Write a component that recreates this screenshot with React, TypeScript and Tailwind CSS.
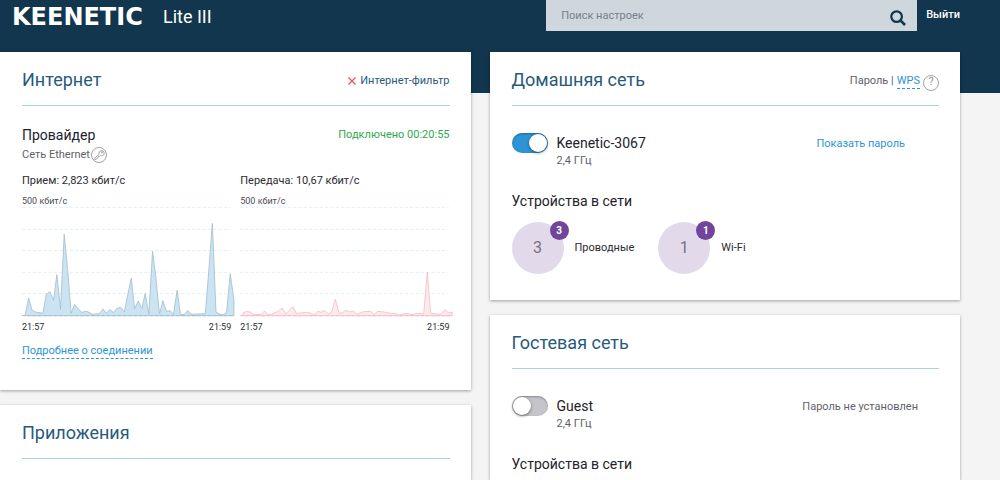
import { useState, type ReactNode } from "react";

const RECEIVED =
  "9,326 20,273 30,309 41,315 63,319 73,262 84,254 95,280 105,203 116,307 127,82 137,184 148,319 158,292 169,306 180,316 193,313 202,316 212,322 233,320 244,306 254,319 265,307 275,317 286,304 297,301 308,315 318,265 329,214 339,305 350,282 361,305 371,259 382,322 393,133 403,211 414,321 424,281 435,313 446,311 456,322 467,250 477,322 489,323 499,310 509,322 552,320 563,184 573,49 584,315 595,322 606,323 616,315 627,200 638,279 638,326";

const SENT =
  "9,326 9,318 20,313 30,315 42,323 64,322 74,312 85,324 96,321 115,313 127,303 138,321 159,299 170,319 200,316 212,318 223,324 234,313 244,316 255,310 266,321 276,315 287,276 298,319 308,317 319,310 330,315 341,312 352,322 372,314 394,313 404,323 414,313 434,315 454,319 468,319 479,324 499,319 522,323 532,319 553,321 564,195 574,319 606,322 617,308 627,317 639,315 639,326";

const GRID = [1, 67, 131, 196, 260, 326];

function TrafficChart({ label, value, points, fill, stroke }: {
  label: string;
  value: string;
  points: string;
  fill: string;
  stroke: string;
}) {
  return (
    <div>
      <p className="text-[11px] leading-4 text-[#2b2b33]">{label}: {value}</p>
      <p className="mt-1 text-[9px] leading-4 text-[#4b4b55]">500 кбит/с</p>
      <svg
        className="mt-[-2px] block h-[110px] w-full overflow-visible"
        viewBox="0 0 630 330"
        preserveAspectRatio="none"
        role="img"
        aria-label={label}
      >
        {GRID.map((y) => (
          <line key={y} x1="0" x2="628" y1={y} y2={y} stroke="#e0eff9" strokeWidth="3" strokeDasharray="10 6" />
        ))}
        <polygon points={points} fill={fill} stroke={stroke} strokeWidth="2.6" strokeLinejoin="round" />
        <line x1="0" x2="638" y1="326" y2="326" stroke={stroke} strokeWidth="3" strokeDasharray="10 6" />
      </svg>
      <div className="mt-[2px] flex justify-between text-[9px] leading-4 text-[#2b2b33]">
        <span>21:57</span>
        <span>21:59</span>
      </div>
    </div>
  );
}

function Card({ title, grow, extra, children }: {
  title: string;
  grow?: boolean;
  extra?: ReactNode;
  children?: ReactNode;
}) {
  return (
    <section
      className={`bg-white pr-[21px] pl-[22px] shadow-[0_1px_3px_rgba(0,0,0,0.35)] ${grow ? "grow" : ""}`}
    >
      <header className="flex h-[54px] items-center justify-between border-b border-[#a9d1ea]">
        <h2 className="pt-[2px] text-lg text-[#285a7c]">{title}</h2>
        {extra}
      </header>
      {children}
    </section>
  );
}

function Toggle({ label, initial }: { label: string; initial: boolean }) {
  const [on, setOn] = useState(initial);
  return (
    <label className="relative block h-5 w-9 shrink-0 cursor-pointer">
      <input
        type="checkbox"
        className="peer sr-only"
        aria-label={label}
        checked={on}
        onChange={(e) => setOn(e.target.checked)}
      />
      <span className="block h-5 w-9 rounded-full bg-[#c5c4ca] shadow-[inset_0_1px_2px_rgba(0,0,0,0.3)] peer-checked:bg-[#2d95d6]" />
      <span className="absolute top-px left-px size-[18px] rounded-full bg-white shadow-[0_1px_3px_rgba(0,0,0,0.5)] peer-checked:left-[17px]" />
    </label>
  );
}

function NetworkRow({ name, on, children }: { name: string; on: boolean; children: ReactNode }) {
  return (
    <div className="flex items-start pt-[27px]">
      <Toggle label={name} initial={on} />
      <div className="ml-[9px] grow">
        <h3 className="text-sm leading-5 text-[#22222a]">{name}</h3>
        <p className="text-[11px] leading-4 text-[#5f5f6b]">2,4 ГГц</p>
      </div>
      {children}
    </div>
  );
}

function Devices({ count, label }: { count: number; label: string }) {
  return (
    <div className="flex items-center gap-[11px]">
      <div className="relative flex size-[52px] items-center justify-center rounded-full bg-[#e2daeb] text-base text-[#77737f]">
        {count}
        <span className="absolute -top-px -right-[5px] flex size-[19px] items-center justify-center rounded-full bg-[#71459b] text-[10px] font-bold text-white">
          {count}
        </span>
      </div>
      <span className="pt-px text-[11px] text-[#2b2b33]">{label}</span>
    </div>
  );
}

export default function App() {
  return (
    <div className="flex min-h-screen flex-col bg-[#f4f4f4] font-['Roboto','Liberation_Sans',sans-serif]">
      <header className="flex h-[93px] items-start bg-[#12364d] pr-10 pl-3">
        <div className="flex h-[34px] grow items-center text-white">
          <span className="w-[151px] font-['DejaVu_Sans',sans-serif] text-2xl font-bold">KEENETIC</span>
          <span className="text-lg">Lite III</span>
        </div>
        <form className="flex h-[31px] w-[371px] items-center bg-[#cfd6dc]" onSubmit={(e) => e.preventDefault()}>
          <input
            type="text"
            aria-label="Поиск настроек"
            placeholder="Поиск настроек"
            className="h-full grow bg-transparent pl-[15px] text-[11px] text-[#12364d] outline-none placeholder:text-[#76818b]"
          />
          <button type="submit" aria-label="Найти" className="mt-1 mr-[11px]">
            <svg className="size-4" viewBox="0 0 16 16" fill="none" stroke="#12364d">
              <circle cx="6.6" cy="6.6" r="5.3" strokeWidth="2.2" />
              <path d="M10.4 10.4 15 15" strokeWidth="2.6" />
            </svg>
          </button>
        </form>
        <button type="button" className="ml-[9px] h-[31px] text-[11px] font-medium text-white">Выйти</button>
      </header>

      <main className="mt-[-41px] grid grow grid-cols-2 gap-[19px] pr-10">
        <div className="flex flex-col gap-[15px]">
          <Card
            title="Интернет"
            extra={
              <a href="#filter" className="flex items-center gap-1 pt-[5px] text-[11px] text-[#285a7c]">
                <svg className="size-2" viewBox="0 0 8 8" stroke="#ee4f4f" strokeWidth="1.2">
                  <path d="M0.5 0.5 7.5 7.5M7.5 0.5 0.5 7.5" />
                </svg>
                Интернет-фильтр
              </a>
            }
          >
            <div className="flex items-center justify-between pt-[19px]">
              <h3 className="text-sm leading-5 text-[#22222a]">Провайдер</h3>
              <span className="text-[11px] text-[#2fa84f]">Подключено 00:20:55</span>
            </div>
            <div className="flex h-5 items-center gap-px text-[11px] text-[#5f5f6b]">
              Сеть Ethernet
              <svg className="size-4" viewBox="0 0 16 16" fill="none" stroke="#8c8c92" strokeWidth="0.8">
                <circle cx="8" cy="8" r="7.5" />
                <path d="M8.2 7.2a2.6 2.6 0 1 1 1.2 1.3L8.3 9.4 7.5 9.5 7.4 10.3 6.6 10.4 6.5 11.2 5 12.4H3.6V11.4z" />
                <circle cx="11.1" cy="5.3" r="0.7" />
              </svg>
            </div>
            <div className="mt-2 grid grid-cols-2 gap-[9px]">
              <TrafficChart label="Прием" value="2,823 кбит/с" points={RECEIVED} fill="#cae4f4" stroke="#a9bfcc" />
              <TrafficChart label="Передача" value="10,67 кбит/с" points={SENT} fill="#fdeaec" stroke="#f5bfc6" />
            </div>
            <a
              href="#details"
              className="mt-[9px] mb-[31px] inline-block border-b border-dashed border-[#2d95d6] text-[11px] leading-[14px] text-[#2d95d6]"
            >
              Подробнее о соединении
            </a>
          </Card>
          <Card title="Приложения" grow />
        </div>

        <div className="flex flex-col gap-[15px]">
          <Card
            title="Домашняя сеть"
            extra={
              <div className="flex items-center gap-[3px] pt-[5px] text-[11px] text-[#5f5f6b]">
                <span>Пароль |</span>
                <a href="#wps" className="border-b border-dashed border-[#2d95d6] leading-[14px] text-[#2d95d6]">WPS</a>
                <button
                  type="button"
                  aria-label="Справка"
                  className="mt-[3px] flex size-4 items-center justify-center rounded-full border border-[#a5a5aa] text-[11px] text-[#96969c]"
                >
                  ?
                </button>
              </div>
            }
          >
            <NetworkRow name="Keenetic-3067" on>
              <button type="button" className="mr-[34px] pt-px text-[11px] leading-5 text-[#2d95d6]">Показать пароль</button>
            </NetworkRow>
            <h3 className="mt-[22px] text-sm leading-5 text-[#22222a]">Устройства в сети</h3>
            <div className="mt-[11px] mb-[26px] flex gap-6">
              <Devices count={3} label="Проводные" />
              <Devices count={1} label="Wi-Fi" />
            </div>
          </Card>
          <Card title="Гостевая сеть" grow>
            <NetworkRow name="Guest" on={false}>
              <span className="mr-[21px] pt-px text-[11px] leading-5 text-[#5f5f6b]">Пароль не установлен</span>
            </NetworkRow>
            <h3 className="mt-[22px] text-sm leading-5 text-[#22222a]">Устройства в сети</h3>
          </Card>
        </div>
      </main>
    </div>
  );
}
